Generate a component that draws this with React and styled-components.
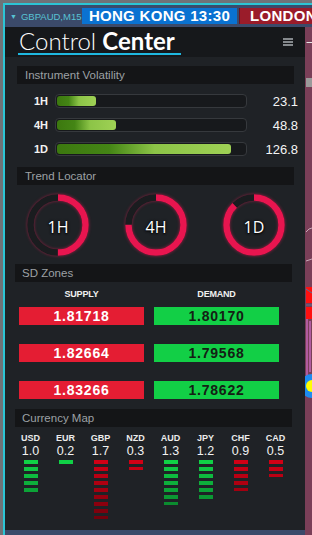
import React from 'react';
import styled, { createGlobalStyle } from 'styled-components';

const VOLATILITY = [
  { label: '1H', value: '23.1', pct: 20.5 },
  { label: '4H', value: '48.8', pct: 31.6 },
  { label: '1D', value: '126.8', pct: 92.6 },
];

const TRENDS = [
  { label: '1H', pct: 0.5 },
  { label: '4H', pct: 0.75 },
  { label: '1D', pct: 0.875 },
];

const ZONES = [
  { supply: '1.81718', demand: '1.80170' },
  { supply: '1.82664', demand: '1.79568' },
  { supply: '1.83266', demand: '1.78622' },
];

const CURRENCIES = [
  { code: 'USD', value: '1.0', up: true },
  { code: 'EUR', value: '0.2', up: true },
  { code: 'GBP', value: '1.7', up: false },
  { code: 'NZD', value: '0.3', up: false },
  { code: 'AUD', value: '1.3', up: true },
  { code: 'JPY', value: '1.2', up: true },
  { code: 'CHF', value: '0.9', up: false },
  { code: 'CAD', value: '0.5', up: false },
];

const GlobalStyle = createGlobalStyle`
  html, body {
    margin: 0;
    padding: 0;
    background: #7a3f58;
  }
  * { box-sizing: border-box; }
`;

function Ring({ label, pct }) {
  const r = 27.5;
  const c = 2 * Math.PI * r;
  return (
    <RingCell>
      <RingSvg width="62" height="62" viewBox="0 0 62 62">
        <circle cx="31" cy="31" r={r} fill="none" stroke="#1a1c1f" strokeWidth="6.5" />
        <circle
          cx="31"
          cy="31"
          r={r}
          fill="none"
          stroke="#e8154f"
          strokeWidth="6.5"
          strokeDasharray={`${c * pct} ${c}`}
          transform="rotate(-90 31 31)"
        />
      </RingSvg>
      <RingLabel>{label}</RingLabel>
    </RingCell>
  );
}

// one bar per 0.2, a thinner bar for the leftover half step
function Meter({ value, up }) {
  const n = parseFloat(value) * 5;
  const full = Math.floor(n + 0.001);
  const half = n - full > 0.2;
  const bars = [];
  for (let i = 0; i < full + (half ? 1 : 0); i++) {
    bars.push(<MeterBar key={i} $up={up} $row={i} $half={half && i === full} />);
  }
  return <MeterStack>{bars}</MeterStack>;
}

function ChartEdge() {
  return (
    <svg width="7" height="508" viewBox="0 0 7 508">
      <line x1="1.5" y1="15.5" x2="7" y2="15.5" stroke="#e6e6e6" strokeWidth="1" />
      <rect x="1" y="51" width="6" height="9" fill="#9a9a9a" />
      <polyline points="1,205 4,202 7,201" fill="none" stroke="#c9a7b7" strokeWidth="1" />
      <polyline points="1,234 4,233 7,232" fill="none" stroke="#c9a7b7" strokeWidth="1" />
      <rect x="1" y="260" width="6" height="16" fill="#ff1010" />
      <line x1="1" y1="262" x2="7" y2="266" stroke="#5c7094" strokeWidth="1" />
      <rect x="1" y="280" width="6" height="12" fill="#ff1010" />
      <line x1="1" y1="278" x2="7" y2="278" stroke="#5c7094" strokeWidth="1" />
      <line x1="2" y1="292" x2="2" y2="350" stroke="#e77be7" strokeWidth="1" />
      <line x1="5" y1="294" x2="5" y2="345" stroke="#e77be7" strokeWidth="1" />
      <circle cx="7" cy="359" r="12" fill="#1e8cf0" />
      <circle cx="7" cy="359" r="6" fill="#ffff00" />
    </svg>
  );
}

export default function App() {
  return (
    <Root>
      <GlobalStyle />
      <Frame>
        <TopBar>
          <Symbol><Caret>▼</Caret>GBPAUD,M15</Symbol>
          <Session $bg="#0a72d1">HONG KONG 13:30</Session>
          <Session $bg="#9a1c2a" $left>LONDON</Session>
        </TopBar>
        <Body>
          <Panel>
            <PanelHeader>
              <Title>
                <Light>Control</Light> <Bold>Center</Bold>
              </Title>
              <Burger>
                <span />
                <span />
                <span />
              </Burger>
            </PanelHeader>

            <SectionTitle $top={9}>Instrument Volatility</SectionTitle>
            <VolList>
              {VOLATILITY.map(v => (
                <VolRow key={v.label}>
                  <VolLabel>{v.label}</VolLabel>
                  <Track>
                    <Fill $pct={v.pct} />
                  </Track>
                  <VolValue>{v.value}</VolValue>
                </VolRow>
              ))}
            </VolList>

            <SectionTitle $top={6}>Trend Locator</SectionTitle>
            <RingRow>
              {TRENDS.map(t => (
                <Ring key={t.label} label={t.label} pct={t.pct} />
              ))}
            </RingRow>

            <SectionTitle $top={8} $shift>SD Zones</SectionTitle>
            <ZoneGrid>
              <ZoneHead>SUPPLY</ZoneHead>
              <ZoneHead>DEMAND</ZoneHead>
              {ZONES.map(z => (
                <React.Fragment key={z.supply}>
                  <ZoneBox $kind="supply">{z.supply}</ZoneBox>
                  <ZoneBox $kind="demand">{z.demand}</ZoneBox>
                </React.Fragment>
              ))}
            </ZoneGrid>

            <SectionTitle $top={10} $shift>Currency Map</SectionTitle>
            <CurrencyGrid>
              {CURRENCIES.map(c => (
                <CurrencyCol key={c.code}>
                  <CurrencyCode>{c.code}</CurrencyCode>
                  <CurrencyValue>{c.value}</CurrencyValue>
                  <Meter value={c.value} up={c.up} />
                </CurrencyCol>
              ))}
            </CurrencyGrid>
          </Panel>
          <ChartStrip>
            <ChartEdge />
          </ChartStrip>
        </Body>
      </Frame>
    </Root>
  );
}

const Root = styled.div`
  width: 312px;
  height: 535px;
  overflow: hidden;
  background: #7a3f58;
  border-top: 3px solid #6f7378;
  border-left: 3px solid #6f7378;
`;
const Frame = styled.div`
  height: 100%;
  display: flex;
  flex-direction: column;
  border-top: 2px solid #2cc5d5;
  border-left: 2px solid #2cc5d5;
`;
const TopBar = styled.div`
  height: 22px;
  flex: none;
  display: flex;
  align-items: center;
  background: #3b4a6a;
  padding-left: 5px;
`;
const Symbol = styled.div`
  width: 72px;
  flex: none;
  font-family: 'Liberation Sans', Arial, sans-serif;
  font-size: 9.5px;
  color: #58c3d3;
  white-space: nowrap;
`;
const Caret = styled.span`
  font-size: 7px;
  margin-right: 4px;
  position: relative;
  top: -1px;
`;
const Session = styled.div`
  flex: none;
  width: ${p => (p.$left ? '73px' : '155px')};
  height: 16px;
  margin-left: ${p => (p.$left ? '2px' : '0')};
  padding-left: ${p => (p.$left ? '10px' : '0')};
  background: ${p => p.$bg};
  border-left: ${p => (p.$left ? '1px solid #6c1420' : 'none')};
  color: #fff;
  font-family: 'Liberation Sans', Arial, sans-serif;
  font-weight: 700;
  font-size: 15px;
  letter-spacing: 0.3px;
  line-height: 16px;
  text-align: ${p => (p.$left ? 'left' : 'center')};
  white-space: nowrap;
  overflow: hidden;
`;
const Body = styled.div`
  flex: 1;
  display: flex;
  background: #3b4a6a;
`;
const Panel = styled.div`
  width: 300px;
  height: 503px;
  flex: none;
  display: flex;
  flex-direction: column;
  background: #1f2226;
`;
const ChartStrip = styled.div`
  flex: 1;
  background: #7a3f58;
  overflow: hidden;
`;
const PanelHeader = styled.div`
  height: 30px;
  flex: none;
  display: flex;
  justify-content: space-between;
  align-items: flex-start;
  background: #16181b;
  padding: 0 12px 0 13px;
`;
const Title = styled.div`
  margin-top: 2px;
  padding: 0 6px 0 1px;
  height: 26px;
  border-bottom: 2px solid #1fb8e0;
  font-family: Lato, 'Open Sans', sans-serif;
  font-size: 24px;
  line-height: 24px;
  color: #fff;
  white-space: nowrap;
`;
const Light = styled.span`
  font-weight: 300;
`;
const Bold = styled.span`
  font-weight: 700;
`;
const Burger = styled.div`
  margin-top: 11px;
  display: flex;
  flex-direction: column;
  gap: 1px;
  span {
    display: block;
    width: 10px;
    height: 2px;
    background: #85898d;
  }
`;
const SectionTitle = styled.div`
  flex: none;
  height: 18px;
  margin: ${p => p.$top}px 0 0 ${p => (p.$shift ? 10 : 12)}px;
  width: 277px;
  padding-left: ${p => (p.$shift ? 7 : 8)}px;
  background: #141517;
  color: #9da1a5;
  font-family: 'Liberation Sans', Arial, sans-serif;
  font-size: 11.5px;
  line-height: 18px;
`;
const VolList = styled.div`
  padding-top: 5px;
  display: flex;
  flex-direction: column;
`;
const VolRow = styled.div`
  height: 24px;
  display: grid;
  grid-template-columns: 43px 192px 44px;
  column-gap: 7px;
  align-items: center;
`;
const VolLabel = styled.div`
  text-align: right;
  color: #f2f2f2;
  font-family: 'Liberation Sans', Arial, sans-serif;
  font-weight: 700;
  font-size: 11px;
`;
const Track = styled.div`
  height: 14px;
  padding: 1px;
  border: 1px solid #36393d;
  border-radius: 4px;
  background: #17191c;
`;
const Fill = styled.div`
  height: 100%;
  width: ${p => p.$pct}%;
  border-radius: 3px;
  background: linear-gradient(to right, #3c780f 0%, #448515 30%, #8cc447 56%, #9fd155 100%);
`;
const VolValue = styled.div`
  text-align: right;
  color: #f4f4f4;
  font-family: 'Liberation Sans', Arial, sans-serif;
  font-size: 13px;
`;
const RingRow = styled.div`
  margin-top: 9px;
  display: grid;
  grid-template-columns: repeat(3, 98px);
  justify-content: center;
  padding-left: 2px;
`;
const RingCell = styled.div`
  justify-self: center;
  width: 62px;
  height: 62px;
  display: grid;
  place-items: center;
  > * { grid-area: 1 / 1; }
`;
const RingSvg = styled.svg`
  filter: drop-shadow(0 0 1.5px rgba(240, 30, 90, 0.55));
`;
const RingLabel = styled.div`
  color: #fff;
  font-family: 'Open Sans', sans-serif;
  font-size: 16px;
  padding-top: 3px;
  text-shadow: 0 1px 2px #000, 0 0 3px #000;
`;
const ZoneGrid = styled.div`
  margin-top: 6px;
  display: grid;
  grid-template-columns: 125px 125px;
  column-gap: 10px;
  row-gap: 19px;
  padding-left: 14px;
  & > :nth-child(3), & > :nth-child(4) {
    margin-top: -12px;
  }
`;
const ZoneHead = styled.div`
  height: 12px;
  text-align: center;
  color: #f0f0f0;
  font-family: 'Liberation Sans', Arial, sans-serif;
  font-weight: 700;
  font-size: 9px;
  letter-spacing: -0.2px;
  line-height: 12px;
`;
const ZoneBox = styled.div`
  height: 18px;
  line-height: 18px;
  text-align: center;
  background: ${p => (p.$kind === 'supply' ? '#e41d33' : '#12cf46')};
  color: ${p => (p.$kind === 'supply' ? '#fff' : '#142014')};
  font-family: 'Liberation Sans', Arial, sans-serif;
  font-weight: 700;
  font-size: 14px;
  letter-spacing: 0.8px;
`;
const CurrencyGrid = styled.div`
  margin-top: 6px;
  display: grid;
  grid-template-columns: repeat(8, 35px);
  padding-left: 8px;
`;
const CurrencyCol = styled.div`
  display: flex;
  flex-direction: column;
  align-items: center;
`;
const CurrencyCode = styled.div`
  height: 10px;
  line-height: 10px;
  color: #ececec;
  font-family: 'Liberation Sans', Arial, sans-serif;
  font-weight: 700;
  font-size: 9px;
`;
const CurrencyValue = styled.div`
  margin-top: 2px;
  height: 13px;
  line-height: 13px;
  color: #f2f2f2;
  font-family: 'Liberation Sans', Arial, sans-serif;
  font-size: 12.5px;
`;
const MeterStack = styled.div`
  margin-top: 2px;
  display: flex;
  flex-direction: column;
  gap: 3px;
`;
const MeterBar = styled.div`
  width: 14px;
  height: ${p => (p.$half ? 3 : 4)}px;
  background: ${p =>
    p.$up
      ? `hsl(137, 86%, ${44 - p.$row * 2.4}%)`
      : `hsl(354, 100%, ${41 - p.$row * 2.3}%)`};
`;
